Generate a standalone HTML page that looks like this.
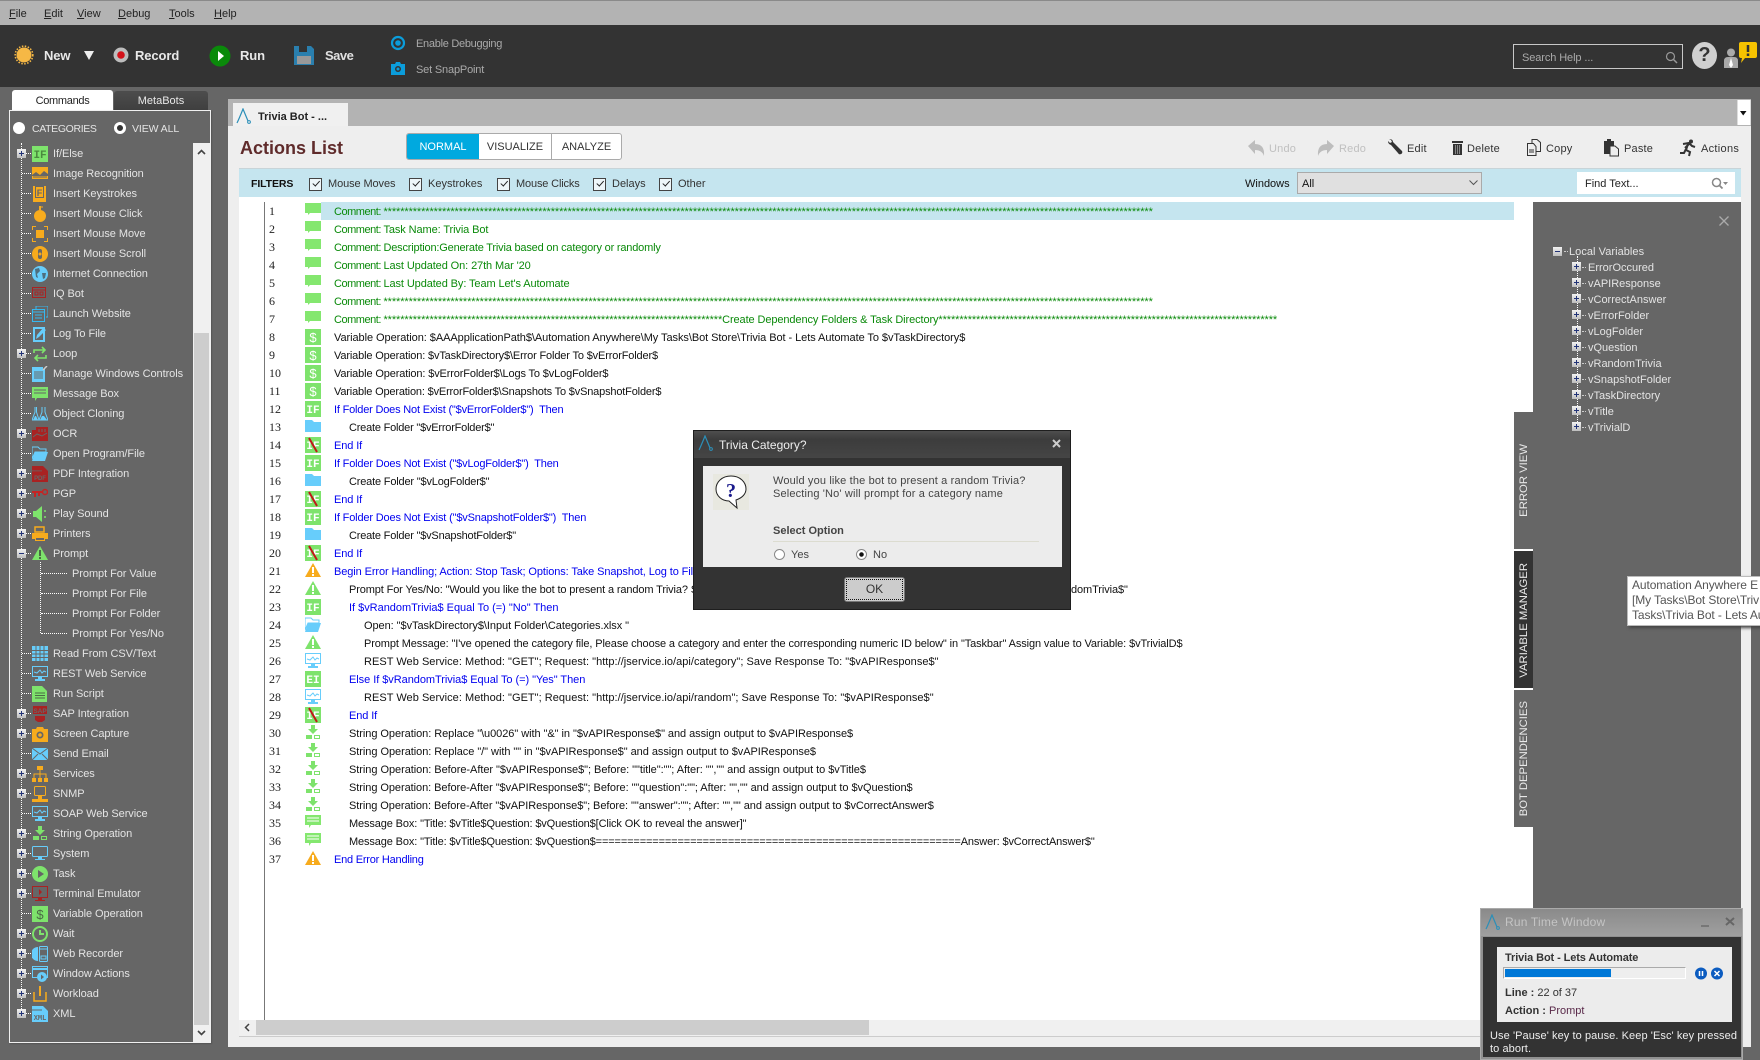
<!DOCTYPE html>
<html><head><meta charset="utf-8"><title>Actions List</title>
<style>
html,body{margin:0;padding:0}
body{width:1760px;height:1060px;overflow:hidden;position:relative;background:#666;font-family:"Liberation Sans",sans-serif;font-size:11px;color:#000}
.a{position:absolute;white-space:pre}
svg{display:block;overflow:visible}
#tree{position:absolute;left:0;top:144px;width:193px;color:#e4e4e4;font-size:11px;letter-spacing:-.06px}
.t{height:20px;line-height:20px;padding-left:53px;position:relative;white-space:pre}
.t:before{content:"";position:absolute;left:22px;width:9px;top:9px;border-top:1px dotted #fff}
.t.c{padding-left:72px}
.t.c:before{left:41px;width:26px}
.t svg{position:absolute;left:32px;top:2px;width:16px;height:16px}
.p{position:absolute;left:17px;top:5px;width:9px;height:9px;background:linear-gradient(#223377,#223377) center/5px 1px no-repeat,linear-gradient(#223377,#223377) center/1px 5px no-repeat,linear-gradient(#f2f2f2,#bdbdbd)}
.p.m{background:linear-gradient(#223377,#223377) center/5px 1px no-repeat,linear-gradient(#f2f2f2,#bdbdbd)}
#rows{position:absolute;left:334px;top:203px;width:1180px;font-size:11px;letter-spacing:-.1px}
#rows div{height:18px;line-height:19px;white-space:pre}
.cm{letter-spacing:-.48px}
.g{color:#0a8a0a}.u{color:#0000f0}.k{color:#111}
.i1{padding-left:15px}.i2{padding-left:30px}
#nums{position:absolute;left:269px;top:202px;font:12px/18px "Liberation Serif",serif;color:#222}
#ics{position:absolute;left:305px;top:203px}
#ics svg{width:16px;height:16px;margin-bottom:2px}
#vars{position:absolute;left:1588px;top:260px;color:#e4e4e4;font-size:11px}
#vars div{height:16px;line-height:16px;position:relative;white-space:pre}
#vars .p{left:-16px;top:2px}
#vars div:before{content:"";position:absolute;left:-6px;width:4px;top:7px;border-top:1px dotted #ccc}
.s{position:absolute;left:1514px;width:19px;height:137px;background:#666}
.s span{position:absolute;left:3px;width:15px;line-height:15px;writing-mode:vertical-rl;transform:rotate(180deg);color:#e8e8e8;font-size:11.3px;white-space:pre}
.cb{position:absolute;top:178px;width:11px;height:11px;border:1px solid #444;background:#eef6f9}
.cb:after{content:"";position:absolute;left:2px;top:1px;width:6px;height:3px;border-left:1.4px solid #222;border-bottom:1.4px solid #222;transform:rotate(-48deg) translate(0,1px)}
.fl{position:absolute;top:177px;line-height:14px;color:#333;font-size:11px}
.tb{position:absolute;top:142px;line-height:14px;font-size:11px;color:#333;letter-spacing:.2px}
</style></head><body>
<svg width="0" height="0" style="position:absolute"><defs>
<symbol id="if" viewBox="0 0 16 16"><rect width="16" height="16" fill="#7ee36c"/><text x="8" y="12" font-family="Liberation Mono" font-size="11" text-anchor="middle" fill="currentColor" font-weight="bold">IF</text></symbol>
<symbol id="ei" viewBox="0 0 16 16"><rect width="16" height="16" fill="#7ee36c"/><text x="8" y="12" font-family="Liberation Mono" font-size="11" text-anchor="middle" fill="#fff" font-weight="bold">EI</text></symbol>
<symbol id="eif" viewBox="0 0 16 16"><rect width="16" height="16" fill="#7ee36c"/><text x="8" y="12" font-family="Liberation Mono" font-size="11" text-anchor="middle" fill="#fff" font-weight="bold">IF</text><path d="M4 1l8 14" stroke="#c01818" stroke-width="2"/></symbol>
<symbol id="var" viewBox="0 0 16 16"><rect width="16" height="16" fill="#7ee36c"/><text x="8" y="13" font-family="Liberation Sans" font-size="13" text-anchor="middle" fill="currentColor">$</text></symbol>
<symbol id="cmt" viewBox="0 0 16 16"><path d="M0 0h16v10H5l-2 2v-2H0z" fill="#84e76f"/></symbol>
<symbol id="msg" viewBox="0 0 16 16"><path d="M0 0h16v10H6l-2 3v-3H0z" fill="#84e76f"/><path d="M2 3h12M2 6h12" stroke="#fff"/></symbol>
<symbol id="folder" viewBox="0 0 16 16"><path d="M0 1h7l2 2h7v10H0z" fill="#67cdfb"/></symbol>
<symbol id="open" viewBox="0 0 16 16"><path d="M0 1h6l2 2h6v3H3L0 13z" fill="none" stroke="#67cdfb" stroke-width="1"/><path d="M3 6h13l-3 9H0z" fill="#67cdfb"/></symbol>
<symbol id="warn" viewBox="0 0 16 16"><path d="M8 0l8 14H0z" fill="#f7ab1d"/><path d="M8 4v6M8 11v2" stroke="#fff" stroke-width="2"/></symbol>
<symbol id="prompt" viewBox="0 0 16 16"><path d="M8 0l8 14H0z" fill="#7ee36c"/><path d="M8 4v6M8 11v2" stroke="#4b6b45" stroke-width="2"/></symbol>
<symbol id="prompt2" viewBox="0 0 16 16"><path d="M8 0l8 14H0z" fill="#7ee36c"/><path d="M8 4v6M8 11v2" stroke="#fff" stroke-width="2"/></symbol>
<symbol id="rest" viewBox="0 0 16 16"><rect x=".5" y=".5" width="15" height="10" fill="none" stroke="#67cdfb"/><path d="M2 6l3 1 3-3 2 3 2-2 2 1" fill="none" stroke="#67cdfb"/><path d="M6 11h4v2h3v2H3v-2h3z" fill="#67cdfb"/></symbol>
<symbol id="str" viewBox="0 0 16 16"><path d="M6 0h4v4h3l-5 5-5-5h3zM1 10h6v4H1z" fill="#7ee36c"/><rect x="9.5" y="10.5" width="5" height="3" fill="none" stroke="#7ee36c"/></symbol>
<symbol id="img" viewBox="0 0 16 16"><rect y="1" width="16" height="12" fill="#f7ab1d"/><path d="M0 9l4-3 4 3 4-4 4 3v2H0z" fill="#666"/><path d="M1 11h14" stroke="#666"/></symbol>
<symbol id="keys" viewBox="0 0 16 16"><path d="M1 0h13v16H1z" fill="#f7ab1d"/><rect x="3" y="0" width="9" height="12" fill="#666"/><rect x="4" y="1" width="7" height="10" fill="#f7ab1d"/><text x="7.5" y="10" font-size="9" font-weight="bold" text-anchor="middle" fill="#666" font-family="Liberation Sans">F</text></symbol>
<symbol id="click" viewBox="0 0 16 16"><ellipse cx="8" cy="10" rx="6" ry="6" fill="#f7ab1d"/><path d="M8 0v4" stroke="#f7ab1d" stroke-width="2"/><path d="M8 1h3" stroke="#f7ab1d"/></symbol>
<symbol id="move" viewBox="0 0 16 16"><rect x="4" y="4" width="8" height="8" fill="#f7ab1d"/><path d="M0 4V0h4M12 0h4v4M16 12v4h-4M4 16H0v-4" fill="none" stroke="#f7ab1d" stroke-width="2"/></symbol>
<symbol id="scroll" viewBox="0 0 16 16"><circle cx="8" cy="8" r="8" fill="#f7ab1d"/><rect x="6" y="3" width="4" height="10" rx="2" fill="#666"/><circle cx="8" cy="8" r="1.5" fill="#f7ab1d"/></symbol>
<symbol id="globe" viewBox="0 0 16 16"><circle cx="8" cy="8" r="8" fill="#67cdfb"/><path d="M3 3l4-1 1 3-3 3 1 4-2-1zM10 7h4l-1 5-2 1z" fill="#4d6f80"/></symbol>
<symbol id="iq" viewBox="0 0 16 16"><rect x=".5" y="1.5" width="13" height="10" fill="none" stroke="#a92222"/><path d="M1 4h12M3 6h3v3H3zM8 6h3v3H8z" fill="none" stroke="#a92222"/></symbol>
<symbol id="launch" viewBox="0 0 16 16"><path d="M4 3V0h12v11h-2" fill="none" stroke="#35b8f0"/><rect x=".5" y="3.5" width="12" height="12" fill="none" stroke="#35b8f0"/><path d="M1 6h11M3 9h7M3 12h7" stroke="#35b8f0"/></symbol>
<symbol id="log" viewBox="0 0 16 16"><rect x="1" y="1" width="12" height="15" fill="#67cdfb"/><rect x="3" y="3" width="8" height="11" fill="#666"/><path d="M4 13l1-4 6-7 3 2-7 7z" fill="#67cdfb"/></symbol>
<symbol id="loop" viewBox="0 0 16 16"><path d="M2 7V4h10M10 1l3 3-3 3M14 9v3H4M6 9l-3 3 3 3" fill="none" stroke="#7ee36c" stroke-width="1.6"/></symbol>
<symbol id="man" viewBox="0 0 16 16"><path d="M0 1h11v2h2v13H0z" fill="#67cdfb"/><path d="M2 6h9M2 8h9M2 10h9M2 12h9" stroke="#666"/><path d="M11 4l4-4" stroke="#ccc" stroke-width="1.5"/></symbol>
<symbol id="mbox" viewBox="0 0 16 16"><path d="M0 1h16v11H5l-2 3v-3H0z" fill="#7ee36c"/><path d="M2 4h12M2 7h12" stroke="#666"/></symbol>
<symbol id="clone" viewBox="0 0 16 16"><path d="M3 1v5L0 14h7L4.500 6V1M10 1v5l-3 8h9l-3-8V1" fill="none" stroke="#67cdfb"/><path d="M1 14l2-4h1l2 4zM8 14l2-4h2l3 4z" fill="#67cdfb"/></symbol>
<symbol id="ocr" viewBox="0 0 16 16"><path d="M0 4h4V1h12v14H0z" fill="#a92222"/><path d="M1 11l4-3 5 2 5-3" stroke="#666" fill="none"/><path d="M7 3v3M10 3v3M13 3v3" stroke="#666"/></symbol>
<symbol id="pdf" viewBox="0 0 16 16"><path d="M0 0h11l5 5v11H0z" fill="#a92222"/><rect x="0" y="4.500" width="10" height=".8" fill="#666"/><text x="8" y="14" font-size="6" font-weight="bold" text-anchor="middle" fill="#666" font-family="Liberation Sans">PDF</text></symbol>
<symbol id="pgp" viewBox="0 0 16 16"><circle cx="13" cy="6" r="2.500" fill="none" stroke="#c42424" stroke-width="1.500"/><path d="M0 6h11M3 6v5M7 6v4" stroke="#c42424" stroke-width="2"/></symbol>
<symbol id="snd" viewBox="0 0 16 16"><path d="M1 5h3l6-5v16l-6-5H1z" fill="#7ee36c"/><path d="M13 4v2M13 10v2" stroke="#7ee36c" stroke-width="1.500"/></symbol>
<symbol id="prn" viewBox="0 0 16 16"><path d="M3 1h9v5H3z" fill="none" stroke="#f7ab1d" stroke-width="1.500"/><path d="M0 7h16v6h-3v-2H3v2H0z" fill="#f7ab1d"/><rect x="3.500" y="11.500" width="9" height="3" fill="none" stroke="#f7ab1d"/></symbol>
<symbol id="csv" viewBox="0 0 16 16"><rect width="16" height="15" fill="#67cdfb"/><path d="M0 4.500h16M0 8h16M0 11.500h16M4 0v15M8 0v15M12 0v15" stroke="#666"/></symbol>
<symbol id="scr" viewBox="0 0 16 16"><path d="M0 0h10l5 5v11H0z" fill="#7ee36c"/><path d="M3 7h10M3 9.500h10M3 12h10" stroke="#4b6b45"/></symbol>
<symbol id="sap" viewBox="0 0 16 16"><rect x="1" width="14" height="8" fill="#a92222"/><text x="8" y="7" font-size="6.500" font-weight="bold" text-anchor="middle" fill="#666" font-family="Liberation Sans">SAP</text><path d="M3 10h10v4l-3 2H6l-3-2z" fill="#a92222"/></symbol>
<symbol id="cam" viewBox="0 0 16 16"><path d="M0 3h4l1-2h6l1 2h4v13H0z" fill="#f7ab1d"/><circle cx="8" cy="9" r="3.500" fill="#666"/><circle cx="8" cy="9" r="1.800" fill="#f7ab1d"/></symbol>
<symbol id="mail" viewBox="0 0 16 16"><path d="M0 2h16v12H0z" fill="#67cdfb"/><path d="M0 2l8 6 8-6M0 14l6-6M16 14l-6-6" fill="none" stroke="#666"/></symbol>
<symbol id="serv" viewBox="0 0 16 16"><path d="M5 0h6v4H5zM0 12h4v4H0zM6 12h4v4H6zM12 12h4v4h-4z" fill="#f7ab1d"/><path d="M8 4v8M2 12V8h12v4" fill="none" stroke="#f7ab1d"/></symbol>
<symbol id="snmp" viewBox="0 0 16 16"><rect x="2.500" y=".5" width="11" height="9" rx="1" fill="none" stroke="#f7ab1d"/><path d="M6 10h4v3H6zM0 13h16v3H0z" fill="#f7ab1d"/></symbol>
<symbol id="sys" viewBox="0 0 16 16"><rect x=".5" y=".5" width="15" height="10" rx="1" fill="none" stroke="#67cdfb"/><path d="M6 11h4v2h3v1H3v-1h3z" fill="#67cdfb"/></symbol>
<symbol id="task" viewBox="0 0 16 16"><circle cx="8" cy="8" r="8" fill="#7ee36c"/><path d="M6 4l6 4-6 4z" fill="#666"/></symbol>
<symbol id="term" viewBox="0 0 16 16"><rect x=".5" y=".5" width="15" height="11" fill="none" stroke="#a92222"/><path d="M7 3l3 3-3 3zM6 12h4v2h3v1H3v-1h3z" fill="#a92222"/></symbol>
<symbol id="wait" viewBox="0 0 16 16"><circle cx="8" cy="8" r="7" fill="none" stroke="#7ee36c" stroke-width="2"/><path d="M8 4v4h4" fill="none" stroke="#7ee36c" stroke-width="2"/></symbol>
<symbol id="web" viewBox="0 0 16 16"><path d="M6 1a7 7 0 0 0 0 14z" fill="#67cdfb"/><rect x="7.500" y=".5" width="8" height="15" rx="1" fill="none" stroke="#67cdfb"/><path d="M8 3h7M9 10h5v3H9z" fill="none" stroke="#67cdfb"/></symbol>
<symbol id="win" viewBox="0 0 16 16"><rect x=".5" y=".5" width="15" height="11" fill="none" stroke="#67cdfb"/><path d="M1 3h14" stroke="#67cdfb" stroke-width="2"/><circle cx="10" cy="11" r="5" fill="#67cdfb"/><path d="M9 8.500l3 2.500-3 2.500z" fill="#666"/></symbol>
<symbol id="wl" viewBox="0 0 16 16"><path d="M2 6v9h12V6" fill="none" stroke="#f7ab1d" stroke-width="1.500"/><path d="M8 0v10" stroke="#f7ab1d" stroke-width="2"/></symbol>
<symbol id="xml" viewBox="0 0 16 16"><path d="M0 0h11l5 5v11H0z" fill="#67cdfb"/><rect y="3.500" width="10" height="1" fill="#666"/><text x="8" y="14" font-size="7" font-weight="bold" text-anchor="middle" fill="#666" font-family="Liberation Mono">XML</text></symbol>
<symbol id="logo" viewBox="0 0 16 16"><path d="M1 15C3 11 5 6 7 1l5 12" fill="none" stroke="#2c8fb8" stroke-width="1.200"/><circle cx="13" cy="14" r="1.400" fill="none" stroke="#2c8fb8"/></symbol>
</defs></svg>

<!-- menu -->
<div class="a" style="left:0;top:0;width:1760px;height:25px;background:#b3b3b3;border-top:1px solid #8a8a8a;box-sizing:border-box"></div>
<div class="a" style="left:9px;top:8px;line-height:13px;color:#222;font-size:11px"><u>F</u>ile</div>
<div class="a" style="left:44px;top:8px;line-height:13px;color:#222;font-size:11px"><u>E</u>dit</div>
<div class="a" style="left:77px;top:8px;line-height:13px;color:#222;font-size:11px"><u>V</u>iew</div>
<div class="a" style="left:118px;top:8px;line-height:13px;color:#222;font-size:11px"><u>D</u>ebug</div>
<div class="a" style="left:169px;top:8px;line-height:13px;color:#222;font-size:11px"><u>T</u>ools</div>
<div class="a" style="left:214px;top:8px;line-height:13px;color:#222;font-size:11px"><u>H</u>elp</div>

<!-- toolbar -->
<div class="a" style="left:0;top:25px;width:1760px;height:62px;background:#333"></div>
<svg class="a" style="left:14px;top:45px" width="20" height="20"><circle cx="10" cy="10" r="7.500" fill="#f6b845"/><circle cx="10" cy="10" r="8.800" fill="none" stroke="#f6b845" stroke-width="1.600" stroke-dasharray="1.500 1.500"/></svg>
<div class="a" style="left:44px;top:48px;font:bold 13px/16px 'Liberation Sans';color:#e8e8e8;letter-spacing:-.1px">New</div>
<svg class="a" style="left:84px;top:50px" width="11" height="11"><path d="M0 1h10L5 10z" fill="#eee"/></svg>
<svg class="a" style="left:113px;top:47px" width="16" height="16"><circle cx="8" cy="8" r="7.500" fill="#bdbdbd"/><circle cx="8" cy="8" r="3.800" fill="#d4121a"/></svg>
<div class="a" style="left:135px;top:48px;font:bold 13px/16px 'Liberation Sans';color:#e8e8e8;letter-spacing:-.1px">Record</div>
<svg class="a" style="left:209px;top:45px" width="22" height="22"><ellipse cx="11" cy="11" rx="10.500" ry="10.500" fill="#0a8a0a"/><path d="M9 6l6 5-6 5z" fill="#fff"/></svg>
<div class="a" style="left:240px;top:48px;font:bold 13px/16px 'Liberation Sans';color:#e8e8e8;letter-spacing:-.1px">Run</div>
<svg class="a" style="left:294px;top:46px" width="20" height="20"><path d="M0 0h17l3 3v16H0z" fill="#2a7fae"/><rect x="5" y="0" width="8" height="6" fill="#333"/><rect x="3" y="10" width="14" height="8" fill="#999"/></svg>
<div class="a" style="left:325px;top:48px;font:bold 13px/16px 'Liberation Sans';color:#e0e0e0;letter-spacing:-.5px">Save</div>
<svg class="a" style="left:390px;top:35px" width="16" height="16"><circle cx="8" cy="8" r="6" fill="none" stroke="#0b9ddb" stroke-width="2.200"/><circle cx="8" cy="8" r="2.800" fill="#0b9ddb"/></svg>
<div class="a" style="left:416px;top:37px;line-height:14px;color:#aaa;font-size:11px;letter-spacing:-.28px">Enable Debugging</div>
<svg class="a" style="left:390px;top:62px" width="16" height="14"><path d="M1 2h4l1-2h4l1 2h4v11H1z" fill="#0b9ddb"/><circle cx="8" cy="7" r="3" fill="#333"/><circle cx="8" cy="7" r="1.500" fill="#0b9ddb"/></svg>
<div class="a" style="left:416px;top:63px;line-height:14px;color:#aaa;font-size:11px;letter-spacing:-.17px">Set SnapPoint</div>
<div class="a" style="left:1513px;top:44px;width:168px;height:23px;border:1px solid #c8c8c8"></div>
<div class="a" style="left:1522px;top:51px;line-height:14px;color:#aaa;font-size:11px;letter-spacing:-.1px">Search Help ...</div>
<svg class="a" style="left:1665px;top:51px" width="13" height="13"><circle cx="5.500" cy="5.500" r="4" fill="none" stroke="#999" stroke-width="1.200"/><path d="M8.500 8.500l3.500 3.500" stroke="#999" stroke-width="1.500"/></svg>
<div class="a" style="left:1692px;top:42px;width:25px;height:27px;border-radius:50%;background:#d0d0d0;text-align:center;font:bold 20px/27px 'Liberation Sans';color:#333">?</div>
<svg class="a" style="left:1724px;top:48px" width="15" height="21"><circle cx="7" cy="4.500" r="4" fill="#aaa"/><path d="M0 20v-7q0-4 4-4h6q4 0 4 4v7z" fill="#aaa"/><path d="M7 10l2 7-2 3-2-3z" fill="#fff"/></svg>
<svg class="a" style="left:1739px;top:42px" width="18" height="22"><path d="M2 0h14q2 0 2 2v12q0 2-2 2H6l-4 5 1-5H2q-2 0-2-2V2q0-2 2-2z" fill="#f6c200"/><path d="M9 3v7M9 11.500v2.500" stroke="#333" stroke-width="2.500"/></svg>

<!-- left panel -->
<div class="a" style="left:12px;top:90px;width:101px;height:21px;background:#fff;border-radius:3px 3px 0 0;text-align:center;line-height:23px;color:#222;font-size:11px;letter-spacing:-.3px">Commands</div>
<div class="a" style="left:114px;top:91px;width:94px;height:19px;background:linear-gradient(#4d4d4d,#3f3f3f);border-radius:3px 3px 0 0;text-align:center;line-height:21px;color:#e8e8e8;font-size:11px">MetaBots</div>
<div class="a" style="left:9px;top:110px;width:200px;height:931px;border:1px solid #f0f0f0;background:#666;box-shadow:1px 1px 1px #555"></div>
<div class="a" style="left:13px;top:122px;width:12px;height:12px;border-radius:50%;background:#fff"></div>
<div class="a" style="left:32px;top:122px;line-height:15px;color:#e4e4e4;font-size:10.5px;letter-spacing:-.35px">CATEGORIES</div>
<div class="a" style="left:114px;top:122px;width:6px;height:6px;border-radius:50%;background:#333;border:3px solid #fff"></div>
<div class="a" style="left:132px;top:122px;line-height:15px;color:#e4e4e4;font-size:10.5px;letter-spacing:-.1px">VIEW ALL</div>
<div class="a" style="left:193px;top:143px;width:17px;height:899px;background:#f0f0f0"></div>
<div class="a" style="left:194px;top:333px;width:15px;height:692px;background:#cdcdcd"></div>
<svg class="a" style="left:197px;top:149px" width="9" height="6"><path d="M1 5l3.500-3.500L8 5" fill="none" stroke="#444" stroke-width="1.600"/></svg>
<svg class="a" style="left:197px;top:1030px" width="9" height="6"><path d="M1 1l3.500 3.500L8 1" fill="none" stroke="#444" stroke-width="1.600"/></svg>
<div class="a" style="left:21px;top:143px;height:870px;border-left:1px dotted #fff"></div>
<div class="a" style="left:40px;top:562px;height:71px;border-left:1px dotted #fff"></div>

<div id="tree">
<div class="t"><i class="p"></i><svg style="color:#4b8a3f"><use href="#if"/></svg>If/Else</div>
<div class="t"><svg><use href="#img"/></svg>Image Recognition</div>
<div class="t"><svg><use href="#keys"/></svg>Insert Keystrokes</div>
<div class="t"><svg><use href="#click"/></svg>Insert Mouse Click</div>
<div class="t"><svg><use href="#move"/></svg>Insert Mouse Move</div>
<div class="t"><svg><use href="#scroll"/></svg>Insert Mouse Scroll</div>
<div class="t"><svg><use href="#globe"/></svg>Internet Connection</div>
<div class="t"><svg><use href="#iq"/></svg>IQ Bot</div>
<div class="t"><svg><use href="#launch"/></svg>Launch Website</div>
<div class="t"><svg><use href="#log"/></svg>Log To File</div>
<div class="t"><i class="p"></i><svg><use href="#loop"/></svg>Loop</div>
<div class="t"><svg><use href="#man"/></svg>Manage Windows Controls</div>
<div class="t"><svg><use href="#mbox"/></svg>Message Box</div>
<div class="t"><svg><use href="#clone"/></svg>Object Cloning</div>
<div class="t"><i class="p"></i><svg><use href="#ocr"/></svg>OCR</div>
<div class="t"><svg><use href="#open"/></svg>Open Program/File</div>
<div class="t"><i class="p"></i><svg><use href="#pdf"/></svg>PDF Integration</div>
<div class="t"><i class="p"></i><svg><use href="#pgp"/></svg>PGP</div>
<div class="t"><i class="p"></i><svg><use href="#snd"/></svg>Play Sound</div>
<div class="t"><i class="p"></i><svg><use href="#prn"/></svg>Printers</div>
<div class="t"><i class="p m"></i><svg><use href="#prompt"/></svg>Prompt</div>
<div class="t c">Prompt For Value</div>
<div class="t c">Prompt For File</div>
<div class="t c">Prompt For Folder</div>
<div class="t c">Prompt For Yes/No</div>
<div class="t"><svg><use href="#csv"/></svg>Read From CSV/Text</div>
<div class="t"><svg><use href="#rest"/></svg>REST Web Service</div>
<div class="t"><svg><use href="#scr"/></svg>Run Script</div>
<div class="t"><i class="p"></i><svg><use href="#sap"/></svg>SAP Integration</div>
<div class="t"><i class="p"></i><svg><use href="#cam"/></svg>Screen Capture</div>
<div class="t"><svg><use href="#mail"/></svg>Send Email</div>
<div class="t"><i class="p"></i><svg><use href="#serv"/></svg>Services</div>
<div class="t"><i class="p"></i><svg><use href="#snmp"/></svg>SNMP</div>
<div class="t"><svg><use href="#rest"/></svg>SOAP Web Service</div>
<div class="t"><i class="p"></i><svg><use href="#str"/></svg>String Operation</div>
<div class="t"><i class="p"></i><svg><use href="#sys"/></svg>System</div>
<div class="t"><i class="p"></i><svg><use href="#task"/></svg>Task</div>
<div class="t"><i class="p"></i><svg><use href="#term"/></svg>Terminal Emulator</div>
<div class="t"><svg style="color:#4b6b45"><use href="#var"/></svg>Variable Operation</div>
<div class="t"><i class="p"></i><svg><use href="#wait"/></svg>Wait</div>
<div class="t"><i class="p"></i><svg><use href="#web"/></svg>Web Recorder</div>
<div class="t"><i class="p"></i><svg><use href="#win"/></svg>Window Actions</div>
<div class="t"><i class="p"></i><svg><use href="#wl"/></svg>Workload</div>
<div class="t"><i class="p"></i><svg><use href="#xml"/></svg>XML</div>
</div>

<!-- main panel -->
<div class="a" style="left:228px;top:99px;width:1523px;height:27px;background:#b3b3b3"></div>
<div class="a" style="left:228px;top:126px;width:1523px;height:921px;background:#eee"></div>
<div class="a" style="left:233px;top:103px;width:115px;height:23px;background:#f0f0f0"></div>
<svg class="a" style="left:236px;top:108px" width="16" height="16"><use href="#logo"/></svg>
<div class="a" style="left:258px;top:110px;font:bold 11px/14px 'Liberation Sans';color:#222">Trivia Bot - ...</div>
<div class="a" style="left:1737px;top:100px;width:12px;height:25px;background:#fff;border:1px solid #ddd;border-width:0 1px"></div>
<svg class="a" style="left:1740px;top:111px" width="7" height="5"><path d="M0 0h6.500L3.200 4.500z" fill="#111"/></svg>
<div class="a" style="left:240px;top:136px;font:bold 18px/24px 'Liberation Sans';color:#5f2b2b">Actions List</div>
<div class="a" style="left:406px;top:133px;width:216px;height:27px;border:1px solid #aaa;border-radius:3px;background:#fff;box-sizing:border-box"></div>
<div class="a" style="left:407px;top:134px;width:72px;height:25px;background:#00a9df;color:#fff;text-align:center;line-height:27px;font-size:11px;border-radius:2px 0 0 2px">NORMAL</div>
<div class="a" style="left:479px;top:134px;width:72px;height:25px;color:#333;text-align:center;line-height:27px;font-size:11px;border-right:1px solid #aaa;box-sizing:content-box">VISUALIZE</div>
<div class="a" style="left:552px;top:134px;width:69px;height:25px;color:#333;text-align:center;line-height:27px;font-size:11px">ANALYZE</div>

<svg class="a" style="left:1248px;top:140px" width="17" height="16"><path d="M0 6l7-6v4q10 0 9 12-2-6-9-6v4z" fill="#bdbdbd"/></svg>
<div class="tb" style="left:1269px;color:#c0c0c0">Undo</div>
<svg class="a" style="left:1317px;top:140px" width="17" height="16"><path d="M17 6l-7-6v4Q0 4 1 16q2-6 9-6v4z" fill="#bdbdbd"/></svg>
<div class="tb" style="left:1339px;color:#c0c0c0">Redo</div>
<svg class="a" style="left:1388px;top:139px" width="15" height="16"><path d="M1 0q4 0 4 3l9 9q1 2-1 3-2 1-3-1L3 6Q0 5 0 2l2 2 2-1-1-2z" fill="#333"/></svg>
<div class="tb" style="left:1407px">Edit</div>
<svg class="a" style="left:1452px;top:140px" width="11" height="15"><path d="M0 1h11v2H0zM1 4h9v11H1z" fill="#333"/><path d="M3.500 5v9M5.500 5v9M7.500 5v9" stroke="#aaa" stroke-width=".7"/></svg>
<div class="tb" style="left:1467px">Delete</div>
<svg class="a" style="left:1527px;top:139px" width="14" height="17"><path d="M5 .5h5l3.500 3v9H5z" fill="#eee" stroke="#333"/><path d="M.5 4.500h6l2.500 3v9H.5z" fill="#eee" stroke="#333"/><path d="M2 11h5M2 13h5" stroke="#333"/></svg>
<div class="tb" style="left:1546px">Copy</div>
<svg class="a" style="left:1604px;top:139px" width="15" height="17"><path d="M0 2h3V0h4v2h3v13H0z" fill="#333"/><path d="M6 7h5l3.500 3v7H6z" fill="#eee" stroke="#333"/></svg>
<div class="tb" style="left:1624px">Paste</div>
<svg class="a" style="left:1680px;top:139px" width="15" height="17"><circle cx="11" cy="2.500" r="2" fill="#333"/><path d="M3 5l6-1 3 3 3 1M8 5L6 11l4 2-1 4M6 10l-2 4-4 0M9 5l-4 4" fill="none" stroke="#333" stroke-width="2"/></svg>
<div class="tb" style="left:1701px;letter-spacing:.3px">Actions</div>

<!-- filters -->
<div class="a" style="left:239px;top:168px;width:1502px;height:29px;background:#c5e5ef;border-top:1px solid #c8d4d8;box-sizing:border-box"></div>
<div class="a" style="left:251px;top:177px;font:bold 10.500px/14px 'Liberation Sans';color:#111;letter-spacing:-.1px">FILTERS</div>
<div class="cb" style="left:309px"></div><div class="fl" style="left:328px;letter-spacing:-.1px">Mouse Moves</div>
<div class="cb" style="left:409px"></div><div class="fl" style="left:428px">Keystrokes</div>
<div class="cb" style="left:497px"></div><div class="fl" style="left:516px;letter-spacing:-.15px">Mouse Clicks</div>
<div class="cb" style="left:593px"></div><div class="fl" style="left:612px">Delays</div>
<div class="cb" style="left:659px"></div><div class="fl" style="left:678px">Other</div>
<div class="fl" style="left:1245px;color:#111">Windows</div>
<div class="a" style="left:1297px;top:172px;width:183px;height:20px;background:#e0e0e0;border:1px solid #aaa;line-height:22px;font-size:11px;color:#111;text-indent:4px">All</div>
<svg class="a" style="left:1469px;top:180px" width="9" height="6"><path d="M.5.5L4.500 4.500 8.500.5" fill="none" stroke="#555"/></svg>
<div class="a" style="left:1577px;top:172px;width:158px;height:22px;background:#fff;line-height:25px;font-size:11px;color:#222;text-indent:8px">Find Text...</div>
<svg class="a" style="left:1711px;top:177px" width="17" height="13"><circle cx="5.500" cy="5.500" r="4" fill="none" stroke="#888" stroke-width="1.500"/><path d="M8.500 8.500l3 3" stroke="#888" stroke-width="1.800"/><path d="M12 5h5l-2.500 3z" fill="#888"/></svg>

<!-- list area -->
<div class="a" style="left:239px;top:197px;width:1502px;height:823px;background:#fff"></div>
<div class="a" style="left:321px;top:202px;width:1193px;height:18px;background:#c5e5ef"></div>
<div class="a" style="left:264px;top:202px;width:1px;height:818px;background:#777"></div>
<div id="nums">1<br>2<br>3<br>4<br>5<br>6<br>7<br>8<br>9<br>10<br>11<br>12<br>13<br>14<br>15<br>16<br>17<br>18<br>19<br>20<br>21<br>22<br>23<br>24<br>25<br>26<br>27<br>28<br>29<br>30<br>31<br>32<br>33<br>34<br>35<br>36<br>37</div>
<div id="ics">
<svg><use href="#cmt"/></svg><svg><use href="#cmt"/></svg><svg><use href="#cmt"/></svg><svg><use href="#cmt"/></svg><svg><use href="#cmt"/></svg><svg><use href="#cmt"/></svg><svg><use href="#cmt"/></svg>
<svg style="color:#fff"><use href="#var"/></svg><svg style="color:#fff"><use href="#var"/></svg><svg style="color:#fff"><use href="#var"/></svg><svg style="color:#fff"><use href="#var"/></svg>
<svg style="color:#fff"><use href="#if"/></svg><svg><use href="#folder"/></svg><svg><use href="#eif"/></svg>
<svg style="color:#fff"><use href="#if"/></svg><svg><use href="#folder"/></svg><svg><use href="#eif"/></svg>
<svg style="color:#fff"><use href="#if"/></svg><svg><use href="#folder"/></svg><svg><use href="#eif"/></svg>
<svg><use href="#warn"/></svg><svg><use href="#prompt2"/></svg><svg style="color:#fff"><use href="#if"/></svg><svg><use href="#open"/></svg><svg><use href="#prompt2"/></svg><svg><use href="#rest"/></svg><svg><use href="#ei"/></svg><svg><use href="#rest"/></svg><svg><use href="#eif"/></svg>
<svg><use href="#str"/></svg><svg><use href="#str"/></svg><svg><use href="#str"/></svg><svg><use href="#str"/></svg><svg><use href="#str"/></svg>
<svg><use href="#msg"/></svg><svg><use href="#msg"/></svg><svg><use href="#warn"/></svg>
</div>
<div id="rows">
<div class="g"><span class="cm">Comment: </span>****************************************************************************************************************************************************************************************</div>
<div class="g"><span class="cm">Comment: </span>Task Name: Trivia Bot</div>
<div class="g" style="letter-spacing:-.19px"><span class="cm">Comment: </span>Description:Generate Trivia based on category or randomly</div>
<div class="g"><span class="cm">Comment: </span>Last Updated On: 27th Mar '20</div>
<div class="g"><span class="cm">Comment: </span>Last Updated By: Team Let's Automate</div>
<div class="g"><span class="cm">Comment: </span>****************************************************************************************************************************************************************************************</div>
<div class="g"><span class="cm">Comment: </span>*********************************************************************************Create Dependency Folders &amp; Task Directory*********************************************************************************</div>
<div class="k" style="letter-spacing:-.063px">Variable Operation: $AAApplicationPath$\Automation Anywhere\My Tasks\Bot Store\Trivia Bot - Lets Automate To $vTaskDirectory$</div>
<div class="k" style="letter-spacing:-.15px">Variable Operation: $vTaskDirectory$\Error Folder To $vErrorFolder$</div>
<div class="k" style="letter-spacing:-.14px">Variable Operation: $vErrorFolder$\Logs To $vLogFolder$</div>
<div class="k" style="letter-spacing:-.17px">Variable Operation: $vErrorFolder$\Snapshots To $vSnapshotFolder$</div>
<div class="u" style="letter-spacing:-.19px">If Folder Does Not Exist ("$vErrorFolder$")  Then</div>
<div class="k i1" style="letter-spacing:-.21px">Create Folder "$vErrorFolder$"</div>
<div class="u">End If</div>
<div class="u" style="letter-spacing:-.17px">If Folder Does Not Exist ("$vLogFolder$")  Then</div>
<div class="k i1" style="letter-spacing:-.18px">Create Folder "$vLogFolder$"</div>
<div class="u">End If</div>
<div class="u" style="letter-spacing:-.165px">If Folder Does Not Exist ("$vSnapshotFolder$")  Then</div>
<div class="k i1" style="letter-spacing:-.2px">Create Folder "$vSnapshotFolder$"</div>
<div class="u">End If</div>
<div class="u">Begin Error Handling; Action: Stop Task; Options: Take Snapshot, Log to File</div>
<div class="k i1" style="letter-spacing:-.13px">Prompt For Yes/No: "Would you like the bot to present a random Trivia? Selecting 'No' will</div>
<div class="u i1" style="letter-spacing:-.02px">If $vRandomTrivia$ Equal To (=) "No" Then</div>
<div class="k i2" style="letter-spacing:-.06px">Open: "$vTaskDirectory$\Input Folder\Categories.xlsx "</div>
<div class="k i2" style="letter-spacing:-.11px">Prompt Message: "I've opened the category file, Please choose a category and enter the corresponding numeric ID below" in "Taskbar" Assign value to Variable: $vTrivialD$</div>
<div class="k i2" style="letter-spacing:.03px">REST Web Service: Method: "GET"; Request: "http://jservice.io/api/category"; Save Response To: "$vAPIResponse$"</div>
<div class="u i1" style="letter-spacing:-.05px">Else If $vRandomTrivia$ Equal To (=) "Yes" Then</div>
<div class="k i2" style="letter-spacing:.03px">REST Web Service: Method: "GET"; Request: "http://jservice.io/api/random"; Save Response To: "$vAPIResponse$"</div>
<div class="u i1">End If</div>
<div class="k i1" style="letter-spacing:-.055px">String Operation: Replace "\u0026" with "&amp;" in "$vAPIResponse$" and assign output to $vAPIResponse$</div>
<div class="k i1" style="letter-spacing:-.05px">String Operation: Replace "/" with "" in "$vAPIResponse$" and assign output to $vAPIResponse$</div>
<div class="k i1" style="letter-spacing:-.05px">String Operation: Before-After "$vAPIResponse$"; Before: ""title":""; After: "","" and assign output to $vTitle$</div>
<div class="k i1" style="letter-spacing:-.06px">String Operation: Before-After "$vAPIResponse$"; Before: ""question":""; After: "","" and assign output to $vQuestion$</div>
<div class="k i1" style="letter-spacing:-.07px">String Operation: Before-After "$vAPIResponse$"; Before: ""answer":""; After: "","" and assign output to $vCorrectAnswer$</div>
<div class="k i1" style="letter-spacing:-.13px">Message Box: "Title: $vTitle$Question: $vQuestion$[Click OK to reveal the answer]"</div>
<div class="k i1" style="letter-spacing:-.13px">Message Box: "Title: $vTitle$Question: $vQuestion$==========================================================Answer: $vCorrectAnswer$"</div>
<div class="u" style="letter-spacing:-.22px">End Error Handling</div>
</div>
<div class="a k" style="left:1071px;top:581px;line-height:19px;font-size:11px;letter-spacing:-.1px">domTrivia$"</div>

<!-- h scrollbar -->
<div class="a" style="left:239px;top:1020px;width:1302px;height:16px;background:#f0f0f0"></div>
<div class="a" style="left:256px;top:1020px;width:613px;height:15px;background:#cdcdcd"></div>
<svg class="a" style="left:244px;top:1023px" width="6" height="9"><path d="M5 1L1.500 4.500 5 8" fill="none" stroke="#444" stroke-width="1.500"/></svg>
<div class="a" style="left:239px;top:1036px;width:1241px;height:1px;background:#ccc"></div>

<!-- right panel -->
<div class="a" style="left:1533px;top:202px;width:208px;height:818px;background:#666"></div>
<svg class="a" style="left:1719px;top:216px" width="10" height="10"><path d="M.5.5l9 9M9.500.5l-9 9" stroke="#aaa" stroke-width="1.300"/></svg>
<div class="s" style="top:412px"><span style="bottom:32px">ERROR VIEW</span></div>
<div class="s" style="top:551px;background:#333"><span style="bottom:10px">VARIABLE MANAGER</span></div>
<div class="s" style="top:690px"><span style="bottom:11px">BOT DEPENDENCIES</span></div>
<div class="a" style="left:1577px;top:256px;height:172px;border-left:1px dotted #fff"></div>
<div class="a p m" style="left:1553px;top:247px"></div>
<div class="a" style="left:1564px;top:251px;width:4px;border-top:1px dotted #ccc"></div>
<div class="a" style="left:1569px;top:244px;line-height:16px;color:#e4e4e4;font-size:11px;letter-spacing:.05px">Local Variables</div>
<div id="vars">
<div><i class="p"></i>ErrorOccured</div>
<div><i class="p"></i>vAPIResponse</div>
<div><i class="p"></i>vCorrectAnswer</div>
<div><i class="p"></i>vErrorFolder</div>
<div><i class="p"></i>vLogFolder</div>
<div><i class="p"></i>vQuestion</div>
<div><i class="p"></i>vRandomTrivia</div>
<div><i class="p"></i>vSnapshotFolder</div>
<div><i class="p"></i>vTaskDirectory</div>
<div><i class="p"></i>vTitle</div>
<div><i class="p"></i>vTrivialD</div>
</div>

<!-- tooltip -->
<div class="a" style="left:1627px;top:576px;width:140px;height:47px;background:#fff;border:1px solid #bbb;box-shadow:2px 2px 3px #444;overflow:hidden;color:#555;font-size:12px;line-height:15px;padding:1px 0 0 4px;box-sizing:content-box;letter-spacing:-.1px">Automation Anywhere E
[My Tasks\Bot Store\Triv
Tasks\Trivia Bot - Lets Au</div>

<!-- dialog -->
<div class="a" style="left:693px;top:430px;width:376px;height:178px;background:#333;border:1px solid #1e1e1e"></div>
<div class="a" style="left:694px;top:431px;width:376px;height:27px;background:linear-gradient(#4e4e4e 0,#3c3c3c 30%,#454545 100%)"></div>
<svg class="a" style="left:698px;top:435px" width="16" height="16"><use href="#logo"/></svg>
<div class="a" style="left:719px;top:438px;line-height:15px;color:#eee;font-size:12px">Trivia Category?</div>
<svg class="a" style="left:1052px;top:439px" width="9" height="9"><path d="M1 1l7 7M8 1l-7 7" stroke="#ccc" stroke-width="2"/></svg>
<div class="a" style="left:703px;top:466px;width:359px;height:101px;background:#ececec"></div>
<svg class="a" style="left:713px;top:474px" width="36" height="36"><rect width="36" height="36" fill="#e8e8e0"/><path d="M18 2C9 2 3 8 3 15c0 7 6 12 13 12l8 7-1-8c6-2 10-6 10-11C33 8 27 2 18 2z" fill="#fff" stroke="#222"/><text x="18" y="23" font-family="Liberation Serif" font-weight="bold" font-size="20" text-anchor="middle" fill="#1a1a8c">?</text></svg>
<div class="a" style="left:773px;top:475px;line-height:13px;color:#444;font-size:11px;letter-spacing:.15px">Would you like the bot to present a random Trivia?
Selecting 'No' will prompt for a category name</div>
<div class="a" style="left:773px;top:524px;font:bold 11px/14px 'Liberation Sans';color:#444">Select Option</div>
<div class="a" style="left:773px;top:541px;width:266px;height:1px;background:#dcdcd0"></div>
<div class="a" style="left:774px;top:549px;width:9px;height:9px;border-radius:50%;background:#fff;border:1px solid #888"></div>
<div class="a" style="left:791px;top:548px;line-height:15px;color:#444;font-size:11px">Yes</div>
<div class="a" style="left:856px;top:549px;width:9px;height:9px;border-radius:50%;background:radial-gradient(#111 0 2px,#fff 2.500px);border:1px solid #888"></div>
<div class="a" style="left:873px;top:548px;line-height:15px;color:#444;font-size:11px">No</div>
<div class="a" style="left:844px;top:577px;width:61px;height:25px;background:#ccc;border-radius:3px;box-sizing:border-box;border:1px solid #777"></div>
<div class="a" style="left:846px;top:579px;width:55px;height:19px;border:1px dotted #111;text-align:center;line-height:19px;font-size:12px;color:#333">OK</div>

<!-- run window -->
<div class="a" style="left:1480px;top:908px;width:263px;height:152px;background:#909090;border:1px solid #aaa;box-sizing:border-box"></div>
<div class="a" style="left:1481px;top:909px;width:261px;height:27px;background:linear-gradient(#8a8a8a,#a0a0a0)"></div>
<svg class="a" style="left:1485px;top:914px" width="16" height="16"><use href="#logo"/></svg>
<div class="a" style="left:1505px;top:915px;line-height:15px;color:#c4c4c4;font-size:12px;letter-spacing:.2px">Run Time Window</div>
<div class="a" style="left:1701px;top:925px;width:8px;height:2px;background:#777"></div>
<svg class="a" style="left:1725px;top:917px" width="10" height="9"><path d="M1 1l8 7M9 1l-8 7" stroke="#666" stroke-width="2"/></svg>
<div class="a" style="left:1483px;top:937px;width:258px;height:120px;background:#333"></div>
<div class="a" style="left:1497px;top:947px;width:235px;height:75px;background:#ececec"></div>
<div class="a" style="left:1505px;top:951px;font:bold 11px/14px 'Liberation Sans';color:#333;letter-spacing:-.1px">Trivia Bot - Lets Automate</div>
<div class="a" style="left:1503px;top:967px;width:181px;height:10px;background:#eee;border:1px solid #aaa;border-right-color:#fff;border-bottom-color:#fff"></div>
<div class="a" style="left:1505px;top:969px;width:106px;height:8px;background:#0078d7"></div>
<svg class="a" style="left:1695px;top:967px" width="30" height="13"><circle cx="6" cy="6.500" r="6" fill="#0c5cc0"/><path d="M4.500 4v5M7.500 4v5" stroke="#fff" stroke-width="1.500"/><circle cx="22" cy="6.500" r="6" fill="#0c5cc0"/><path d="M19.500 4l5 5M24.500 4l-5 5" stroke="#fff" stroke-width="1.500"/></svg>
<div class="a" style="left:1505px;top:986px;line-height:14px;font-size:11px;color:#333"><b>Line :</b> 22 of 37</div>
<div class="a" style="left:1505px;top:1004px;line-height:14px;font-size:11px;color:#333"><b>Action :</b> <span style="color:#5a2a4a">Prompt</span></div>
<div class="a" style="left:1490px;top:1030px;line-height:13px;font-size:11px;color:#eee;letter-spacing:.08px">Use 'Pause' key to pause. Keep 'Esc' key pressed
to abort.</div>
</body></html>
